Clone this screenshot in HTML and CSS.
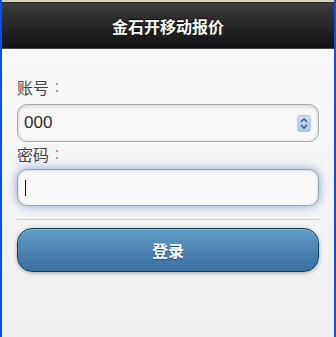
FILE: index.html
```html
<!DOCTYPE html>
<html lang="zh">
<head>
<meta charset="utf-8">
<title>金石开移动报价</title>
<link rel="stylesheet" href="styles.css">
</head>
<body>
<div class="page">
  <div class="topstrip"></div>
  <header class="header"><h1 class="title">金石开移动报价</h1></header>
  <main class="content">
    <div class="field">
      <label class="label"><span>账号</span><span class="colon">:</span></label>
      <div class="input">
        <span class="value">000</span>
        <svg class="spin" width="14" height="17" viewBox="0 0 14 17">
          <defs>
            <linearGradient id="sg" x1="0" y1="0" x2="0" y2="1">
              <stop offset="0" stop-color="#cddcf8"/>
              <stop offset="1" stop-color="#aac3f0"/>
            </linearGradient>
          </defs>
          <rect x="0.5" y="0.5" width="13" height="16" rx="2" fill="url(#sg)" stroke="#b3c7ee"/>
          <path d="M4 7 L7 4 L10 7" fill="none" stroke="#4b5e86" stroke-width="1.6"/>
          <path d="M4 10 L7 13 L10 10" fill="none" stroke="#4b5e86" stroke-width="1.6"/>
        </svg>
      </div>
    </div>
    <div class="field">
      <label class="label label-2"><span>密码</span><span class="colon">:</span></label>
      <div class="input input-focus input-2"><span class="caret"></span></div>
    </div>
    <hr class="divider">
    <div class="button">登录</div>
  </main>
</div>
</body>
</html>
```
FILE: styles.css
```css
html, body {
  margin: 0;
  padding: 0;
  height: 100%;
}
body {
  font-family: "Noto Sans CJK SC", "Liberation Sans", sans-serif;
}
.page {
  box-sizing: border-box;
  height: 100vh;
  display: flex;
  flex-direction: column;
  border-left: 2px solid #0b4ff2;
  border-right: 2px solid #0b4ff2;
}
.topstrip {
  height: 2px;
  background: #d8d1bb;
}
.header {
  height: 45px;
  border-top: 1px solid #2a2a2a;
  border-bottom: 1px solid #454545;
  background: linear-gradient(#3c3c3c, #121212);
  display: flex;
  align-items: center;
  justify-content: center;
}
.title {
  margin: 0;
  font-size: 16px;
  font-weight: bold;
  color: #fff;
  line-height: 18px;
  text-shadow: 0 -1px 1px #000;
  padding-top: 1px;
}
.content {
  flex: 1;
  padding: 29px 15px 15px 15px;
  background: linear-gradient(#f9f9f9, #efefef);
}
.label {
  display: flex;
  align-items: center;
  height: 18px;
  font-size: 16px;
  line-height: 18px;
  color: #444;
}
.colon {
  width: 16px;
  text-align: center;
  font-family: "Liberation Sans", sans-serif;
  color: #777;
}
.label-2 {
  margin-top: 3px;
}
.input {
  box-sizing: border-box;
  margin-top: 8px;
  height: 38px;
  border: 1px solid #a8a8a8;
  border-radius: 10px;
  background: #f9f9f9;
  box-shadow: inset 0 1px 4px rgba(0,0,0,0.18);
  display: flex;
  align-items: center;
  padding: 0 7px 0 6px;
}
.input-2 {
  margin-top: 6px;
  height: 37px;
  padding-left: 7px;
}
.input-focus {
  border-color: #9aa3ad;
  box-shadow: inset 0 1px 3px rgba(0,0,0,0.15), 0 0 10px #7fa6d6;
}
.value {
  flex: 1;
  font-family: "Liberation Sans", sans-serif;
  font-size: 17px;
  color: #2a2a2a;
}
.spin {
  display: block;
}
.caret {
  display: block;
  width: 1px;
  height: 16px;
  background: #111;
}
.divider {
  margin: 13px 0 0 0;
  border: 0;
  border-top: 1px solid #cfcfcf;
  height: 0;
}
.button {
  box-sizing: border-box;
  margin-top: 8px;
  height: 44px;
  border: 1px solid #0a4166;
  border-radius: 15px;
  background: linear-gradient(#619dc7, #3a6da0);
  box-shadow: 0 1px 4px rgba(0,0,0,0.3), inset 0 1px 0 rgba(255,255,255,0.25);
  color: #fff;
  font-size: 16px;
  font-weight: bold;
  text-shadow: 0 1px 1px #1c4770;
  display: flex;
  align-items: center;
  justify-content: center;
}
```
